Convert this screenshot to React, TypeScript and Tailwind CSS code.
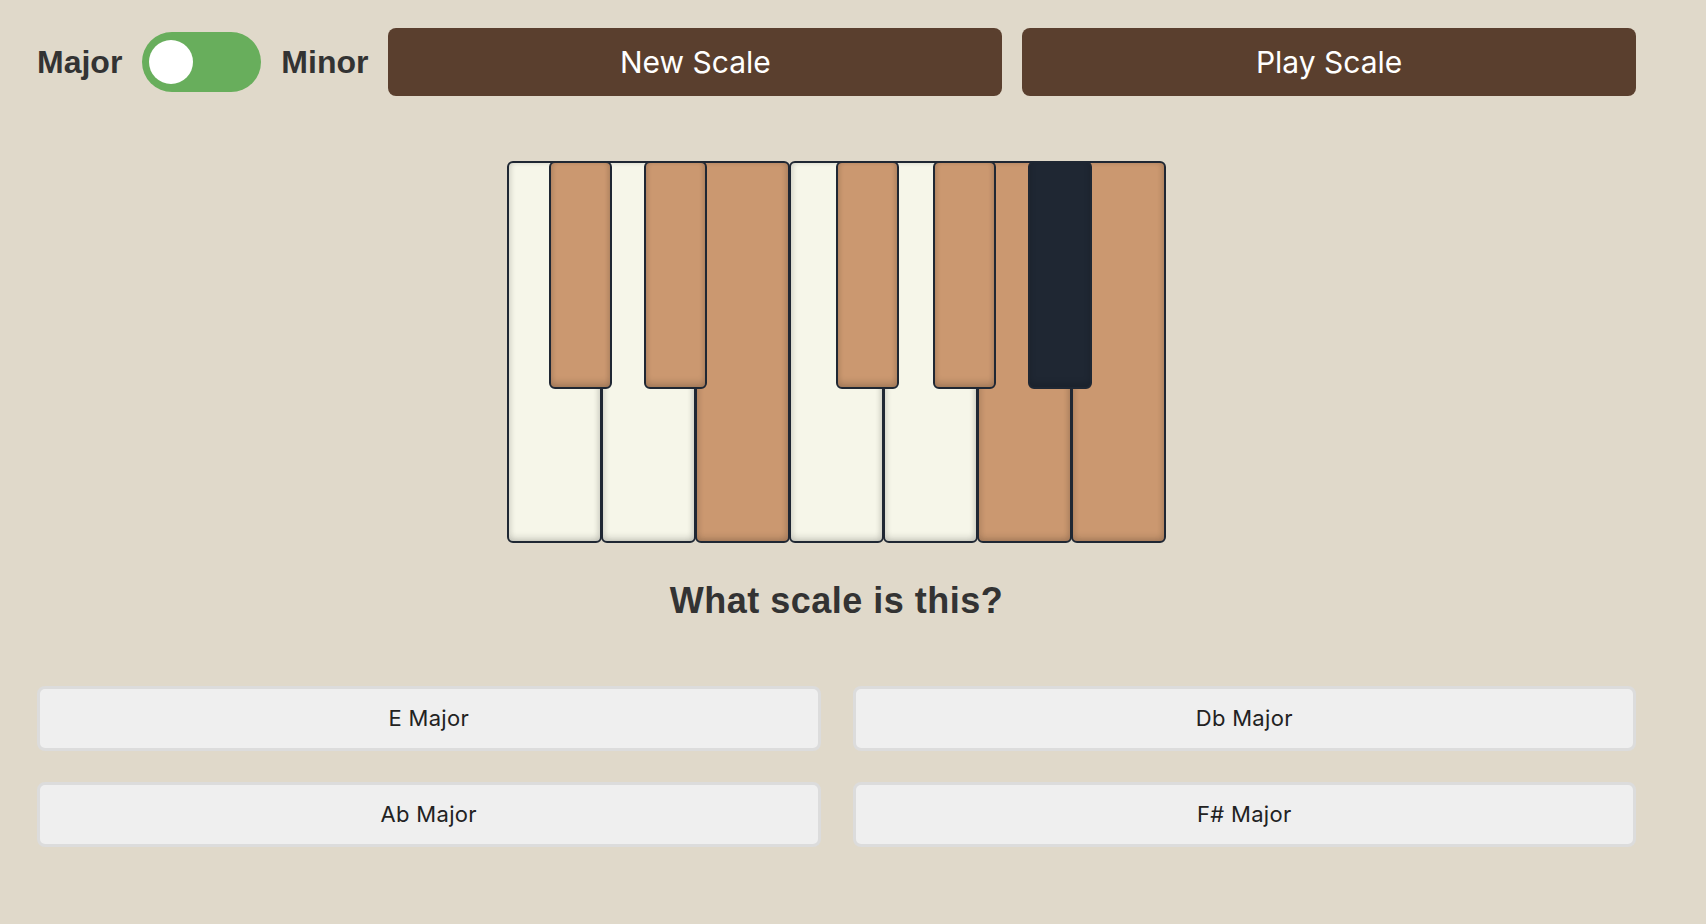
import React from "react";

const whites = [
  { note: "C", hl: false },
  { note: "D", hl: false },
  { note: "E", hl: true },
  { note: "F", hl: false },
  { note: "G", hl: false },
  { note: "A", hl: true },
  { note: "B", hl: true },
];

const blacks = [
  { note: "C#", left: 42, dark: false },
  { note: "D#", left: 137, dark: false },
  { note: "F#", left: 329, dark: false },
  { note: "G#", left: 426, dark: false },
  { note: "A#", left: 521, dark: true },
];

const answers = ["E Major", "Db Major", "Ab Major", "F# Major"];

export default function App() {
  return (
    <div className="min-h-[924px] w-full bg-[#e0d9ca] font-['Liberation_Sans',Arial,sans-serif]">
      <div className="ml-[37px] w-[1599px] pt-[28px]">
        {/* Top bar */}
        <div className="flex h-[68px] items-center gap-5">
          <span className="text-[32px] font-bold leading-none text-[#333333]">Major</span>
          <div className="relative h-[60px] w-[119px] shrink-0 rounded-full bg-[#68ae5c]">
            <div className="absolute left-[7px] top-[8px] h-[44px] w-[44px] rounded-full bg-white" />
          </div>
          <span className="text-[32px] font-bold leading-none text-[#333333]">Minor</span>
          <button className="h-[68px] flex-1 rounded-lg bg-[#5a3f2e] font-['Inter',sans-serif] text-[30px] text-white">
            New Scale
          </button>
          <button className="h-[68px] flex-1 rounded-lg bg-[#5a3f2e] font-['Inter',sans-serif] text-[30px] text-white">
            Play Scale
          </button>
        </div>

        {/* Piano */}
        <div className="mt-[65px] flex justify-center">
          <div className="relative flex h-[382px] w-[660px]">
            {whites.map((k, i) => (
              <div
                key={k.note}
                className={
                  (i === 0 ? "" : "-ml-px ") +
                  (k.hl
                    ? "h-full flex-1 rounded-md border-2 border-[#1f2733] bg-[#cb9870] shadow-[inset_0_-4px_6px_rgba(0,0,0,0.12),inset_3px_0_5px_rgba(0,0,0,0.06),inset_-3px_0_5px_rgba(0,0,0,0.08)]"
                    : "h-full flex-1 rounded-md border-2 border-[#1f2733] bg-[#f6f6e9] shadow-[inset_0_-4px_6px_rgba(0,0,0,0.12),inset_3px_0_5px_rgba(0,0,0,0.06),inset_-3px_0_5px_rgba(0,0,0,0.08)]")
                }
              />
            ))}
            {blacks.map((b) => (
              <div
                key={b.note}
                className={
                  b.dark
                    ? "absolute top-0 h-[228px] w-[64px] rounded-md border-2 border-[#1f2733] bg-[#1f2733] shadow-[inset_0_-4px_6px_rgba(0,0,0,0.15)]"
                    : "absolute top-0 h-[228px] w-[63px] rounded-md border-2 border-[#1f2733] bg-[#cb9870] shadow-[inset_0_-5px_6px_rgba(0,0,0,0.14),inset_2px_0_4px_rgba(0,0,0,0.05),inset_-2px_0_4px_rgba(0,0,0,0.07)]"
                }
                style={{ left: b.left }}
              />
            ))}
          </div>
        </div>

        {/* Question */}
        <h2 className="mt-[40px] text-center text-[36px] font-bold leading-none tracking-[0.5px] text-[#333333]">
          What scale is this?
        </h2>

        {/* Answers */}
        <div className="mt-[67px] grid grid-cols-2 gap-x-[32px] gap-y-[31px]">
          {answers.map((a) => (
            <button
              key={a}
              className="h-[65px] rounded-lg border-[3px] border-[#dcdcdc] bg-[#efefef] font-['Inter',sans-serif] text-[22px] tracking-[0.3px] text-[#222222]"
            >
              {a}
            </button>
          ))}
        </div>
      </div>
    </div>
  );
}
